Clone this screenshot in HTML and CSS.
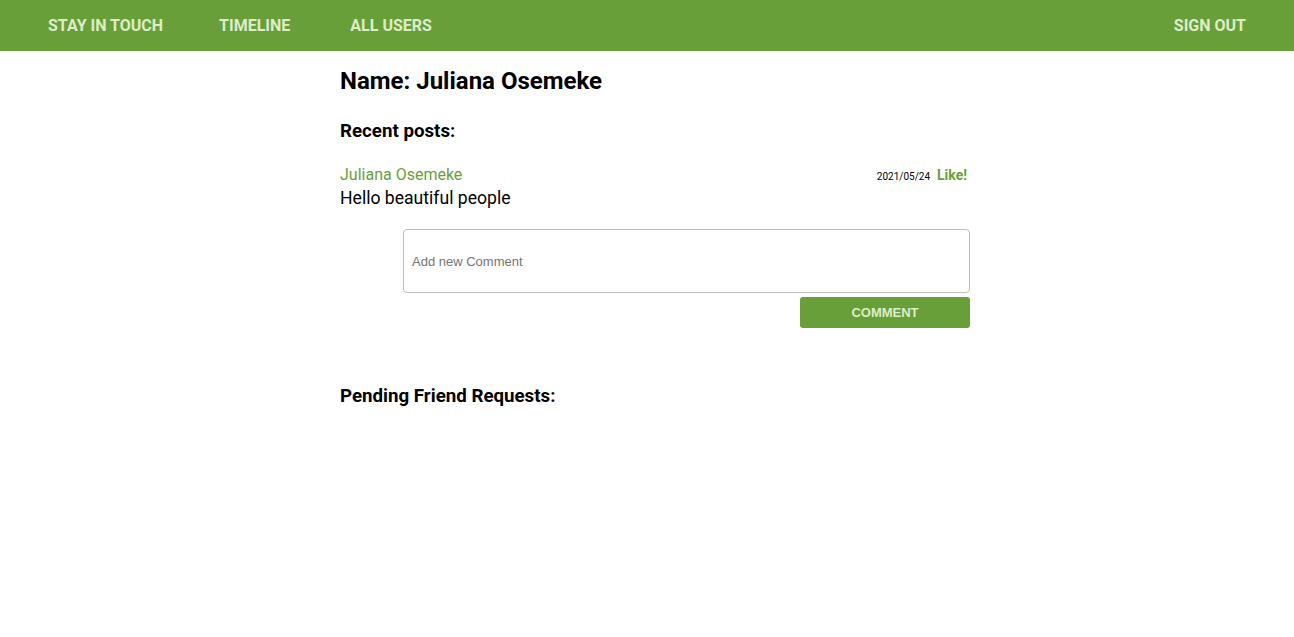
FILE: index.html
```html
<!DOCTYPE html>
<html>
<head>
<meta charset="utf-8">
<link rel="stylesheet" href="styles.css">
</head>
<body>
<nav class="nav">
  <div class="nav-left">
    <a class="nav-link">STAY IN TOUCH</a>
    <a class="nav-link">TIMELINE</a>
    <a class="nav-link nav-link-wide">ALL USERS</a>
  </div>
  <a class="nav-link">SIGN OUT</a>
</nav>
<main class="wrap">
  <section class="col">
    <h1 class="name">Name: Juliana Osemeke</h1>
    <h2 class="sub">Recent posts:</h2>
    <article class="post">
      <div class="post-head">
        <span class="author">Juliana Osemeke</span>
        <span class="meta"><span class="date">2021/05/24</span><span class="like">Like!</span></span>
      </div>
      <p class="body">Hello beautiful people</p>
      <form class="comment">
        <textarea class="comment-input" placeholder="Add new Comment"></textarea>
        <button type="button" class="comment-btn">COMMENT</button>
      </form>
    </article>
    <h2 class="sub pending">Pending Friend Requests:</h2>
  </section>
</main>
</body>
</html>
```
FILE: styles.css
```css
* { box-sizing: border-box; }
body {
  margin: 0;
  font-family: Roboto, "Liberation Sans", sans-serif;
  color: #000;
  background: #fff;
}
.nav {
  height: 51px;
  background: #689f38;
  display: flex;
  align-items: center;
  justify-content: space-between;
  padding: 0 20px;
}
.nav-left { display: flex; }
.nav-link {
  color: #dcedc8;
  font-weight: 700;
  font-size: 16px;
  padding: 0 28px;
  line-height: 51px;
}
.nav-link-wide { padding-left: 32px; }
.wrap {
  display: flex;
  justify-content: center;
  padding-left: 16px;
}
.col { width: 630px; }
.name {
  font-size: 24px;
  font-weight: 700;
  margin: 15px 0 0;
  line-height: 30px;
}
.sub {
  font-size: 18.72px;
  font-weight: 700;
  margin: 24px 0 0;
  line-height: 22px;
}
.post { margin-top: 23px; }
.post-head {
  display: flex;
  justify-content: space-between;
  align-items: baseline;
  line-height: 20px;
}
.author { color: #689f38; font-size: 16px; }
.meta { display: flex; align-items: baseline; padding-right: 3px; }
.date { font-size: 10px; margin-right: 7px; }
.like { color: #689f38; font-weight: 700; font-size: 14px; }
.body {
  margin: 0;
  font-size: 17.6px;
  line-height: 22px;
}
.comment {
  margin: 20px 0 0 63px;
  display: flex;
  flex-direction: column;
  align-items: flex-end;
}
.comment-input {
  width: 100%;
  height: 64px;
  border: 1px solid #bdbdbd;
  border-radius: 4px;
  padding: 24px 8px 22px;
  font-family: "Liberation Sans", Arial, sans-serif;
  font-size: 13px;
  resize: none;
  display: block;
}
.comment-input::placeholder { color: #757575; }
.comment-btn {
  margin-top: 4px;
  width: 170px;
  height: 31px;
  border: 0;
  border-radius: 3px;
  background: #689f38;
  color: #dcedc8;
  font-family: "Liberation Sans", Arial, sans-serif;
  font-weight: 700;
  font-size: 13px;
}
.pending { margin-top: 57px; }
```
